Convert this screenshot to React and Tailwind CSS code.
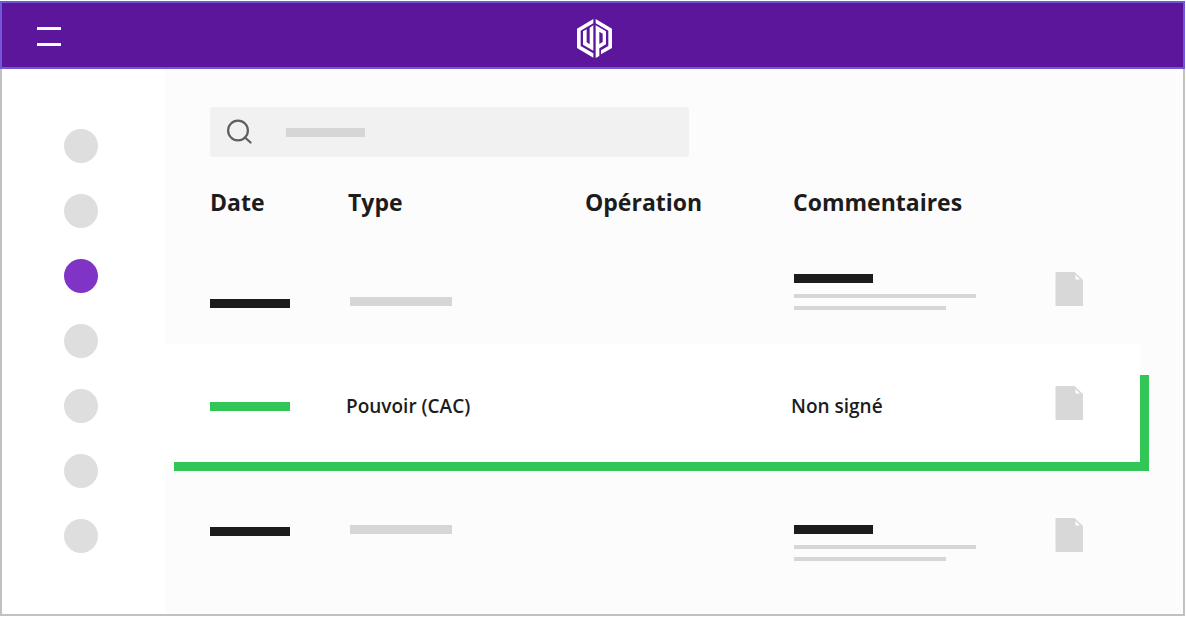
import React from "react";

const navItems = ["Accueil", "Sociétés", "Documents", "Signatures", "Contacts", "Archives", "Paramètres"];

function Logo() {
  return (
    <svg viewBox="0 0 105 117" className="mt-1 h-[39px] w-[35px]" fill="#fff" aria-hidden="true">
      <path d="M49 0V13L11 35V81L49 103V116L0 87V29Z" />
      <path d="M56 0V13L94 35V81L72 94V106L105 87V29Z" />
      <path d="M18 37L29 31V70L38 76V26L49 19V95L18 77Z" />
      <path fillRule="evenodd" d="M56 19L87 37V76L67 88V111L56 117ZM67 38V75L77 69V44Z" />
    </svg>
  );
}

function DocIcon() {
  return (
    <svg viewBox="0 0 28 34" className="block h-[34px] w-7" aria-hidden="true">
      <path d="M1.500 0H19.500L28 8V34H1.500Q0.500 34 0.500 33V1Q0.500 0 1.500 0Z" fill="#d8d8d8" />
      <path d="M20.500 3V7.500H25Z" fill="#fff" />
    </svg>
  );
}

function DocButton() {
  return (
    <button type="button" aria-label="Ouvrir le document" className="block">
      <DocIcon />
    </button>
  );
}

function CommentLines() {
  return (
    <>
      <div className="h-[9px] w-[79px] bg-[#1c1c1c]" />
      <div className="mt-[11px] h-[4px] w-[182px] bg-[#d6d6d6]" />
      <div className="mt-[8px] h-[4px] w-[152px] bg-[#d6d6d6]" />
    </>
  );
}

export default function App() {
  return (
    <div className="flex min-h-screen flex-col bg-white pt-px pr-px pb-[2px] font-['Open_Sans',sans-serif] text-[#1c1c1c]">
      <header className="grid h-[68px] grid-cols-[1fr_auto_1fr] items-center border-2 border-[#6f57d8] bg-[#5c169c] pt-[3px] pl-[3px]">
        <button type="button" aria-label="Menu" className="ml-8 flex w-6 flex-col gap-[13px]">
          <span className="h-[3px] w-full bg-white" />
          <span className="h-[3px] w-full bg-white" />
        </button>
        <Logo />
      </header>

      <div className="flex flex-1 border-x-2 border-b-2 border-[#c1c1c1]">
        <nav className="flex w-[163px] shrink-0 flex-col gap-[31px] pt-[60px] pl-[62px]">
          {navItems.map((label, i) => (
            <button
              key={label}
              type="button"
              aria-label={label}
              className={i === 2 ? "size-[34px] rounded-full bg-[#8034c6]" : "size-[34px] rounded-full bg-[#dedede]"}
            />
          ))}
        </nav>

        <main className="min-w-0 flex-1 bg-[#fcfcfc] pt-[38px] pr-[43px]">
          <div className="relative ml-[45px] h-[50px] max-w-[479px] rounded bg-[#f1f1f1]">
            <input
              type="search"
              aria-label="Rechercher"
              className="size-full rounded bg-transparent pr-4 pl-[76px] text-[19px] outline-none"
            />
            <svg
              viewBox="0 0 26 26"
              className="pointer-events-none absolute top-3 left-4 size-[26px]"
              fill="none"
              stroke="#5f5f5f"
              strokeWidth="2.200"
              strokeLinecap="round"
              aria-hidden="true"
            >
              <circle cx="12" cy="11.500" r="9.900" />
              <path d="M19 18.500L24.500 23.500" />
            </svg>
            <span className="pointer-events-none absolute top-[21px] left-[76px] h-[9px] w-[79px] bg-[#d6d6d6]" />
          </div>

          <table className="w-full table-fixed border-collapse text-left">
            <thead>
              <tr className="h-[93px] text-[23px] leading-8 font-bold">
                <th scope="col" className="w-[183px] pb-[3px] pl-[45px]">Date</th>
                <th scope="col" className="w-[237px] pb-[3px]">Type</th>
                <th scope="col" className="w-[208px] pb-[3px]">Opération</th>
                <th scope="col" className="w-[262px] pb-[3px]">Commentaires</th>
                <td />
              </tr>
            </thead>
            <tbody>
              <tr className="h-[94px] align-top">
                <td className="pt-[49px] pl-[45px]"><div className="h-[9px] w-[80px] bg-[#1c1c1c]" /></td>
                <td className="pt-[47px] pl-[2px]"><div className="h-[9px] w-[102px] bg-[#d6d6d6]" /></td>
                <td />
                <td className="pt-[24px] pl-px"><CommentLines /></td>
                <td className="pt-[22px]"><DocButton /></td>
              </tr>
              <tr className="relative h-[118px] bg-white text-[19px] leading-6 font-semibold">
                <td className="pt-[7px] pl-[45px]">
                  <span className="pointer-events-none absolute top-[31px] -right-[9px] -bottom-[9px] left-[9px] border-r-[9px] border-b-[9px] border-[#32c656]" />
                  <div className="h-[9px] w-[80px] bg-[#32c656]" />
                </td>
                <td className="pt-[6px]"><div className="-ml-[2px]">Pouvoir (CAC)</div></td>
                <td />
                <td className="pt-[6px]"><div className="-ml-[2px]">Non signé</div></td>
                <td><DocButton /></td>
              </tr>
              <tr className="h-[152px] align-top">
                <td className="pt-[65px] pl-[45px]"><div className="h-[9px] w-[80px] bg-[#1c1c1c]" /></td>
                <td className="pt-[63px] pl-[2px]"><div className="h-[9px] w-[102px] bg-[#d6d6d6]" /></td>
                <td />
                <td className="pt-[63px] pl-px"><CommentLines /></td>
                <td className="pt-[56px]"><DocButton /></td>
              </tr>
            </tbody>
          </table>
        </main>
      </div>
    </div>
  );
}
